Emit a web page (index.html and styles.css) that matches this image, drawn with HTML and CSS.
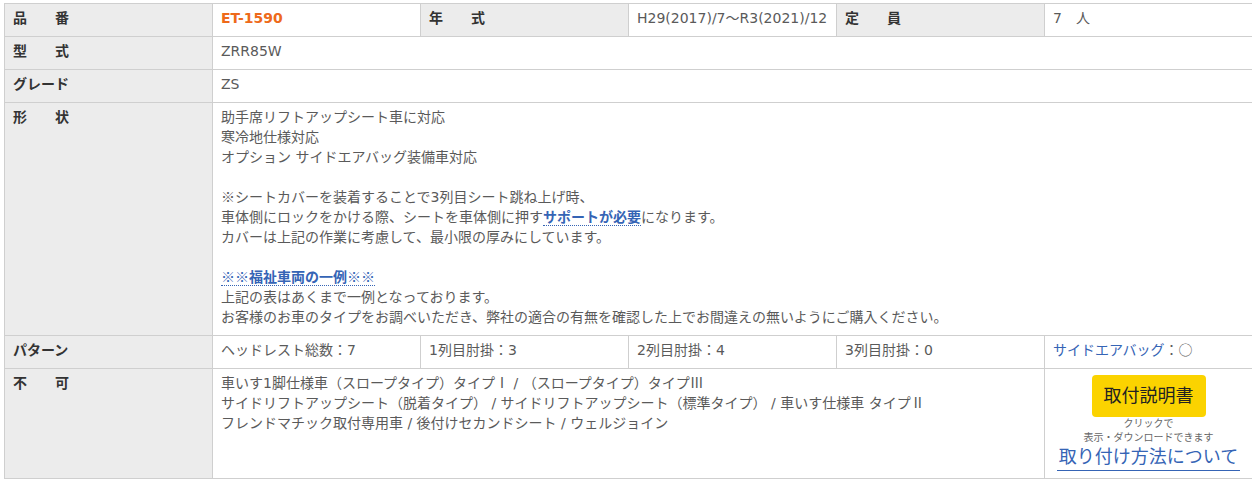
FILE: index.html
```html
<!DOCTYPE html>
<html lang="ja">
<head>
  <meta charset="UTF-8">
  <title>ET-1590 適合表</title>
  <link rel="stylesheet" href="styles.css">
</head>
<body>

  <table class="spec">
    <colgroup>
      <col><col><col><col><col><col>
    </colgroup>
    <tr>
      <th>品　　番</th>
      <td class="code">ET-1590</td>
      <th>年　　式</th>
      <td>H29(2017)/7～R3(2021)/12</td>
      <th>定　　員</th>
      <td>7　人</td>
    </tr>
    <tr>
      <th>型　　式</th>
      <td colspan="5">ZRR85W</td>
    </tr>
    <tr>
      <th>グレード</th>
      <td colspan="5">ZS</td>
    </tr>
    <tr>
      <th>形　　状</th>
      <td colspan="5">
        助手席リフトアップシート車に対応<br>
        寒冷地仕様対応<br>
        オプション サイドエアバッグ装備車対応<br>
        <br>
        <span class="zen">※</span>シートカバーを装着することで3列目シート跳ね上げ時、<br>
        車体側にロックをかける際、シートを車体側に押す<span class="notice">サポートが必要</span>になります。<br>
        カバーは上記の作業に考慮して、最小限の厚みにしています。<br>
        <br>
        <span class="notice"><span class="zen">※※</span>福祉車両の一例<span class="zen">※※</span></span><br>
        上記の表はあくまで一例となっております。<br>
        お客様のお車のタイプをお調べいただき、弊社の適合の有無を確認した上でお間違えの無いようにご購入ください。
      </td>
    </tr>
    <tr>
      <th>パターン</th>
      <td>ヘッドレスト総数：7</td>
      <td>1列目肘掛：3</td>
      <td>2列目肘掛：4</td>
      <td>3列目肘掛：0</td>
      <td><span class="airbag">サイドエアバッグ</span>：<span class="zen">○</span></td>
    </tr>
    <tr>
      <th>不　　可</th>
      <td colspan="4">
        車いす1脚仕様車（スロープタイプ）タイプ<span class="zen">Ⅰ</span> / （スロープタイプ）タイプ<span class="zen">Ⅲ</span><br>
        サイドリフトアップシート（脱着タイプ） / サイドリフトアップシート（標準タイプ） / 車いす仕様車 タイプ<span class="zen">Ⅱ</span><br>
        フレンドマチック取付専用車 / 後付けセカンドシート / ウェルジョイン
      </td>
      <td class="manual">
        <a class="manual-btn" href="#">取付説明書</a>
        <p class="manual-note">クリックで<br>表示・ダウンロードできます</p>
        <a class="howto" href="#">取り付け方法について</a>
      </td>
    </tr>
  </table>

</body>
</html>
```

FILE: styles.css
```css
body {
  margin: 3px 4px;
  font-family: "DejaVu Sans", "Noto Sans CJK JP", sans-serif;
  font-size: 14px;
  color: #5a5a5a;
  background: #fff;
}
.spec {
  width: 1249px;
  table-layout: fixed;
  border-collapse: collapse;
}
.spec col {
  width: 208px;
}
.spec th,
.spec td {
  border: 1px solid #cfcfcf;
  padding: 4px 8px 8px;
  line-height: 20px;
  text-align: left;
  vertical-align: top;
  white-space: nowrap;
}
.spec th {
  background: #ececec;
  color: #333;
  font-weight: bold;
}
.spec .code {
  color: #ee6a1a;
  font-weight: bold;
}
.zen {
  font-family: "Noto Sans CJK JP", sans-serif;
  line-height: 1;
}
.notice {
  color: #3564b5;
  font-weight: bold;
  border-bottom: 1px dotted #3564b5;
}
.notice .zen {
  font-weight: normal;
}
.airbag {
  color: #3564b5;
}
.spec .manual {
  text-align: center;
  padding: 6px 8px 7px;
}
.manual-btn {
  display: inline-block;
  padding: 8px 12px;
  line-height: 26px;
  font-size: 18px;
  color: #222;
  background: #fbd300;
  border-radius: 4px;
  text-decoration: none;
}
.manual-note {
  margin: 0;
  font-size: 10px;
  line-height: 14px;
  color: #666;
}
.howto {
  display: inline-block;
  font-size: 18px;
  line-height: 24px;
  color: #3564b5;
  text-decoration: none;
  border-bottom: 1px solid #3564b5;
  padding: 0 2px 1px;
}
```
